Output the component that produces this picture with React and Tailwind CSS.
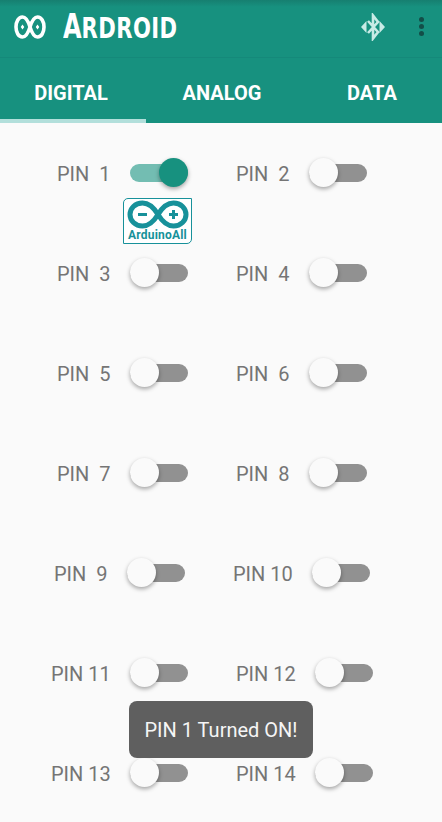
const ROWS = [
  [{ label: 'PIN  1', ml: 'ml-[57px]', gap: 'ml-[19px]', on: true }, { label: 'PIN  2', ml: 'ml-[15px]', gap: 'ml-[19px]' }],
  [{ label: 'PIN  3', ml: 'ml-[57px]', gap: 'ml-[19px]' }, { label: 'PIN  4', ml: 'ml-[15px]', gap: 'ml-[19px]' }],
  [{ label: 'PIN  5', ml: 'ml-[57px]', gap: 'ml-[19px]' }, { label: 'PIN  6', ml: 'ml-[15px]', gap: 'ml-[19px]' }],
  [{ label: 'PIN  7', ml: 'ml-[57px]', gap: 'ml-[19px]' }, { label: 'PIN  8', ml: 'ml-[15px]', gap: 'ml-[19px]' }],
  [{ label: 'PIN  9', ml: 'ml-[54px]', gap: 'ml-[19px]' }, { label: 'PIN 10', ml: 'ml-[12px]', gap: 'ml-[19px]' }],
  [{ label: 'PIN 11', ml: 'ml-[51px]', gap: 'ml-[19px]' }, { label: 'PIN 12', ml: 'ml-[15px]', gap: 'ml-[19px]' }],
  [{ label: 'PIN 13', ml: 'ml-[51px]', gap: 'ml-[19px]' }, { label: 'PIN 14', ml: 'ml-[15px]', gap: 'ml-[19px]' }],
];

const TABS = [
  { name: 'DIGITAL', cls: 'w-[146px] pr-[4px] border-[#b2dfdb]' },
  { name: 'ANALOG', cls: 'w-[152px] border-transparent' },
  { name: 'DATA', cls: 'flex-1 pl-[4px] border-transparent' },
];

const Toggle = ({ on }) => (
  <div className="relative w-[58px] h-[30px] flex items-center shrink-0">
    <div className={`w-full h-[18px] rounded-full ${on ? 'bg-[#73bdb2]' : 'bg-[#919191]'}`} />
    <div
      className={`absolute top-0 w-[29px] h-[29px] rounded-full shadow-[0_2px_4px_rgba(0,0,0,0.35)] ${
        on ? 'right-0 bg-[#17917f]' : 'left-0 bg-[#fafafa]'
      }`}
    />
  </div>
);

const Pin = ({ pin }) => (
  <div className={`flex items-center ${pin.ml}`}>
    <span className="pt-[2px] text-[20px] leading-none text-[#757575] whitespace-pre">{pin.label}</span>
    <div className={pin.gap}>
      <Toggle on={pin.on} />
    </div>
  </div>
);

const InfinityLogo = () => (
  <svg width="32" height="26" viewBox="0 0 32 26" fill="none" stroke="white" strokeWidth="3.6">
    <path d="M8.500 3C4.500 3 2 7.500 2 13s2.500 10 6.500 10c3.500 0 5.500-3.500 7.500-10 2-6.500 4-10 7.500-10 4 0 6.500 4.500 6.500 10s-2.500 10-6.500 10c-3.500 0-5.500-3.500-7.500-10-2-6.500-4-10-7.500-10z" />
    <path d="M8.500 10.500l1.800 2.500-1.800 2.500-1.800-2.500zM23.500 10.500l1.800 2.500-1.800 2.500-1.800-2.500z" fill="white" stroke="none" />
  </svg>
);

const BluetoothIcon = () => (
  <svg width="24" height="28" viewBox="0 0 24 28" fill="none" stroke="#c8ebe6" strokeWidth="2.600">
    <path d="M7 8l10 11-5 6.500V2.500L17 9 7 20" />
    <path d="M0 14l5.500-6v12zM24 14l-5.500-6v12z" fill="#c8ebe6" stroke="none" />
  </svg>
);

const ArduinoBadge = () => (
  <div className="absolute left-[123px] top-[198px] w-[69px] h-[46px] bg-white border border-[#17919a] rounded-tl-[5px] rounded-br-[5px] flex flex-col items-center pt-[1px]">
    <svg width="62" height="29" viewBox="0 0 62 29" fill="none" stroke="#17919a" strokeWidth="5">
      <path d="M15.500 3C8 3 3 8.500 3 14.500S8 26 15.500 26c6 0 11-4 15.500-11.500C35.500 7 40.500 3 46.500 3 54 3 59 8.500 59 14.500S54 26 46.500 26c-6 0-11-4-15.500-11.500C26.500 7 21.500 3 15.500 3z" />
      <path d="M11 14.500h9M42 14.500h9M46.500 10v9" strokeWidth="3" />
    </svg>
    <span className="text-[12px] leading-[12px] font-bold text-[#17919a] tracking-[0.2px]">ArduinoAll</span>
  </div>
);

export default function App() {
  return (
    <div className="relative w-[442px] h-[822px] overflow-hidden bg-[#fafafa] font-['Roboto',sans-serif]">
      {/* app bar */}
      <div className="h-[58px] bg-[#17917f] bg-gradient-to-b from-[#167f70] to-[#17917f] to-[12%] border-b border-[#15897a] flex items-center pl-[14px] pr-[18px] pb-[4px]">
        <InfinityLogo />
        <div className="ml-[17px] w-[114px] origin-left scale-x-[0.81] font-['DejaVu_Sans_Condensed',sans-serif] font-bold text-white leading-none flex items-baseline whitespace-nowrap">
          <span className="text-[33px]">A</span>
          <span className="text-[29px] tracking-[0.5px]">RDROID</span>
        </div>
        <div className="ml-auto mr-[34px] flex">
          <BluetoothIcon />
        </div>
        <div className="flex flex-col gap-[2px]">
          <span className="w-[5px] h-[5px] rounded-full bg-[#134e48]" />
          <span className="w-[5px] h-[5px] rounded-full bg-[#134e48]" />
          <span className="w-[5px] h-[5px] rounded-full bg-[#134e48]" />
        </div>
      </div>

      {/* tabs */}
      <div className="h-[65px] bg-[#17917f] flex">
        {TABS.map((t) => (
          <div
            key={t.name}
            className={`flex items-center justify-center border-b-[4px] pt-[8px] text-[20px] font-bold text-white ${t.cls}`}
          >
            {t.name}
          </div>
        ))}
      </div>

      {/* pins */}
      <div className="flex flex-col">
        {ROWS.map((row, i) => (
          <div key={i} className="h-[100px] grid grid-cols-[221px_221px] items-center">
            <Pin pin={row[0]} />
            <Pin pin={row[1]} />
          </div>
        ))}
      </div>

      <ArduinoBadge />

      {/* toast */}
      <div className="absolute left-[129px] top-[701px] w-[184px] h-[57px] rounded-[8px] bg-[#5f5f5f] flex items-center justify-center text-[20px] text-[#f5f5f5]">
        PIN 1 Turned ON!
      </div>
    </div>
  );
}
